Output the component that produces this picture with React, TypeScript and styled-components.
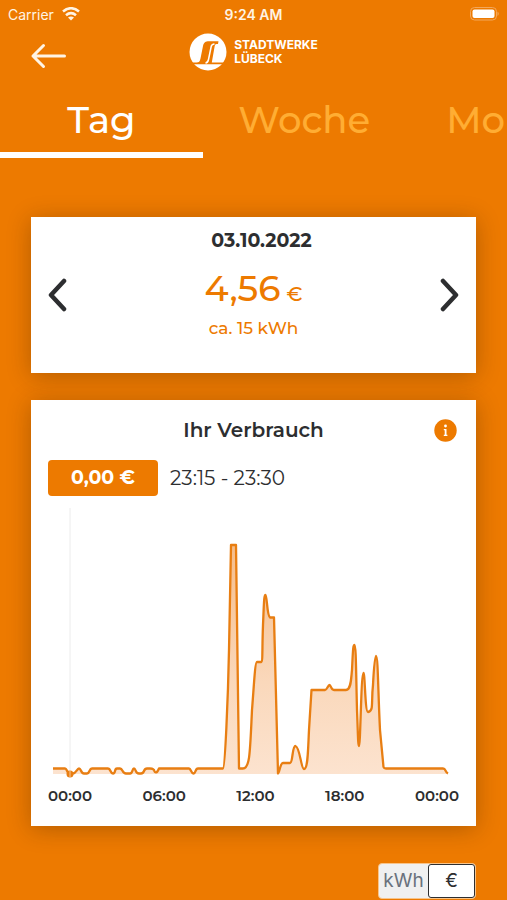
import React, { useState } from "react";
import styled, { createGlobalStyle } from "styled-components";

const ORANGE = "#ed7a00";
const INK = "#2d2e30";

const GlobalStyle = createGlobalStyle`
  *, *::before, *::after { box-sizing: border-box; }
  body {
    margin: 0;
    background: ${ORANGE};
    color: ${INK};
    font-family: Montserrat, Inter, "Open Sans", sans-serif;
    font-weight: 500;
    overflow-x: hidden;
  }
  button { font: inherit; color: inherit; cursor: pointer; }
`;

const Screen = styled.div`
  display: flex;
  flex-direction: column;
  overflow: hidden;
`;

const StatusBar = styled.div`
  display: grid;
  grid-template-columns: 1fr auto 1fr;
  align-items: center;
  height: 28px;
  padding: 0 8px;
  color: #fff4e4;
  font-family: Inter, sans-serif;
  font-size: 14px;
  font-weight: 400;
`;

const Carrier = styled.div`
  display: flex;
  align-items: center;
  gap: 8px;
`;

const Clock = styled.time`
  font-weight: 600;
`;

const BatteryIcon = styled.svg`
  justify-self: end;
`;

const Header = styled.header`
  display: grid;
  grid-template-columns: 1fr auto 1fr;
  align-items: center;
  height: 56px;
  padding: 0 30px;
`;

const IconButton = styled.button`
  display: flex;
  justify-self: start;
  padding: 0;
  border: 0;
  background: none;
`;

const Brand = styled.div`
  display: flex;
  align-items: center;
  gap: 7px;
  padding-bottom: 8px;
  color: #fff;
  font-family: Inter, "Open Sans", sans-serif;
  font-size: 12px;
  font-weight: 700;
  line-height: 14px;
`;

const BrandName = styled.span`
  display: flex;
  flex-direction: column;
`;

const Tabs = styled.nav`
  display: flex;
`;

const Tab = styled.button<{ $active: boolean }>`
  flex: 0 0 40%;
  height: 74px;
  padding: 4px 0 0;
  border: 0;
  border-bottom: 6px solid ${(p) => (p.$active ? "#fff" : "transparent")};
  background: none;
  color: ${(p) => (p.$active ? "#fff" : "#ffad33")};
  font-size: 37px;
  line-height: 44px;
`;

const Content = styled.main`
  display: flex;
  flex-direction: column;
  gap: 27px;
  padding: 59px 31px 0;
`;

const Card = styled.section`
  background: #fff;
  box-shadow: 0 3px 22px rgba(60, 30, 0, 0.32);
`;

const DayCard = styled(Card)`
  display: grid;
  grid-template-columns: auto 1fr auto;
  align-items: center;
  height: 156px;
  padding: 0 16px;
`;

const Summary = styled.div`
  display: flex;
  flex-direction: column;
  align-items: center;
  padding-bottom: 22px;
`;

const DateTitle = styled.h2`
  margin: 0;
  padding-left: 16px;
  font-size: 19px;
  font-weight: 700;
  line-height: 24px;
`;

const Price = styled.p`
  display: flex;
  align-items: baseline;
  gap: 6px;
  margin: 13px 0 0;
  color: ${ORANGE};
  font-size: 36px;
  line-height: 44px;
`;

const Unit = styled.span`
  font-size: 20px;
`;

const Energy = styled.p`
  margin: 0;
  color: ${ORANGE};
  font-size: 17px;
  line-height: 24px;
`;

const UsageCard = styled(Card)`
  padding-bottom: 20px;
`;

const UsageHead = styled.div`
  display: grid;
  grid-template-columns: 1fr auto 1fr;
  align-items: center;
  height: 60px;
  padding: 0 19px;
`;

const UsageTitle = styled.h2`
  grid-column: 2;
  margin: 0;
  font-size: 20px;
  font-weight: 600;
  line-height: 24px;
`;

const InfoButton = styled(IconButton)`
  justify-self: end;
`;

const Reading = styled.div`
  display: flex;
  align-items: center;
  gap: 12px;
  padding: 0 17px;
  font-size: 20px;
  font-weight: 400;
`;

const Badge = styled.strong`
  width: 110px;
  border-radius: 4px;
  background: ${ORANGE};
  color: #fff;
  font-size: 19px;
  font-weight: 700;
  line-height: 36px;
  text-align: center;
`;

const Chart = styled.svg`
  display: block;
  width: 100%;
  margin-top: 9px;
`;

const AxisLabels = styled.div`
  display: flex;
  justify-content: space-between;
  padding: 0 17px;
  font-size: 15px;
  font-weight: 600;
  line-height: 21px;
`;

const UnitSwitch = styled.div`
  display: grid;
  grid-template-columns: 49px 1fr;
  align-self: flex-end;
  width: 98px;
  height: 36px;
  margin-top: 10px;
  border: 1px solid #f8c48a;
  border-radius: 4px;
  background: #f0f0f0;
`;

const UnitButton = styled.button<{ $active: boolean }>`
  padding: 0;
  border: ${(p) => (p.$active ? `1px solid ${INK}` : "0")};
  border-radius: 3px;
  background: ${(p) => (p.$active ? "#fff" : "transparent")};
  color: ${(p) => (p.$active ? INK : "#6a727d")};
  font-family: Inter, sans-serif;
  font-size: 19px;
  font-weight: 400;
  line-height: 24px;
`;

const TABS = ["Tag", "Woche", "Monat"];
const HOURS = ["00:00", "06:00", "12:00", "18:00", "00:00"];
const UNITS = ["kWh", "€"];

const CURVE =
  "M53 768.500H65C67 768.500 67 773.500 70 773.500H73C76 773.500 77 768.500 79 768.500S81 773.500 84 773.500H87C90 773.500 89 768.500 92 768.500H108C111 768.500 110 773.500 113 773.500S114 768.500 117 768.500H120C123 768.500 122 773.500 126 773.500H130C133 773.500 132 768.500 134 768.500S135 773.500 139 773.500H141C145 773.500 143 768.500 147 768.500H150C153 768.500 152 768.500 154 770C155 773.500 157 773.500 159 768.500H189C191 768.500 191 773.500 193.500 773.500S195 768.500 198 768.500H223C225 768 228 700 229 650L231 545H236L239 768.500H243C250 768.500 250 752 252 710C254 685 255 662 257 662H261C263 662 262 650 263 625C264 602 264 595 265.500 595C267 595 267 616 270 617.500H274L278 773.500C279.500 773.500 280 763 283 763H290C293 763 292 746 295.500 746C300 747 301 769 304 769C308 769 308 750 309 730L311.500 690H325C327 690 328 685 329.500 685S331 690 334 690H346C351 690 351 680 352 670C353 650 353 645 354.500 645C356 645 356 670 357 710C358 735 358 746 359 746C360.500 746 361 673 363.500 673C365 673 365 712 368 712C374 711 371 703 373 685C374 665 375 656 376 656C378 656 378 690 380 730L383.500 767Q384 768.500 386 768.500H443C446 768.500 445 772 448 773.500";

function UsageChart() {
  return (
    <Chart viewBox="31 505 445 280" role="img" aria-label="Verbrauch im Tagesverlauf">
      <defs>
        <linearGradient id="usage-fill" x1="0" y1="545" x2="0" y2="774" gradientUnits="userSpaceOnUse">
          <stop offset="0" stopColor="#f5bd8b" />
          <stop offset="0.6" stopColor="#fad8bb" />
          <stop offset="1" stopColor="#fce3cf" />
        </linearGradient>
      </defs>
      <path d="M70 508V770" stroke="#ececec" strokeWidth="1" />
      <path d={`${CURVE}V774H53Z`} fill="url(#usage-fill)" />
      <path d={CURVE} fill="none" stroke="#e87e12" strokeWidth="2.300" strokeLinejoin="round" />
      <circle cx="70" cy="774" r="3.500" fill="#e87e12" />
      <path d="M70 771V777" stroke="#f6c79a" strokeWidth="1" />
    </Chart>
  );
}

function Chevron({ d, label }: { d: string; label: string }) {
  return (
    <IconButton type="button" aria-label={label}>
      <svg width="20" height="34" viewBox="0 0 20 34" fill="none" stroke={INK} strokeWidth="4.500" strokeLinecap="round" strokeLinejoin="round">
        <path d={d} />
      </svg>
    </IconButton>
  );
}

export default function App() {
  const [tab, setTab] = useState("Tag");
  const [unit, setUnit] = useState("€");

  return (
    <Screen>
      <GlobalStyle />
      <StatusBar>
        <Carrier>
          Carrier
          <svg width="18" height="14" viewBox="0 0 18 14" fill="none" stroke="#fff4e4" strokeWidth="2.600">
            <path d="M1 4.500Q9-2 17 4.500" />
            <path d="M4 8.200Q9 4 14 8.200" />
            <path d="M9 13.500L6 10.600Q9 8.400 12 10.600Z" fill="#fff4e4" stroke="none" />
          </svg>
        </Carrier>
        <Clock>9:24 AM</Clock>
        <BatteryIcon width="30" height="14" viewBox="0 0 30 14">
          <rect x="1.500" y="0.500" width="26" height="12.500" rx="4" fill="none" stroke="#f3a75a" />
          <rect x="3.500" y="2.500" width="22" height="8.500" rx="2" fill="#fff" />
          <path d="M28.500 4.500Q31 6.700 28.500 9Z" fill="#f3a75a" />
        </BatteryIcon>
      </StatusBar>

      <Header>
        <IconButton type="button" aria-label="Zurück">
          <svg width="37" height="26" viewBox="0 0 37 26" fill="none" stroke="#fff4e4" strokeWidth="3" strokeLinecap="round" strokeLinejoin="round">
            <path d="M34.500 13H3M13.500 2.500L3 13L13.500 23.500" />
          </svg>
        </IconButton>
        <Brand>
          <svg width="38" height="38" viewBox="0 0 38 38">
            <circle cx="19" cy="19" r="18.500" fill="#fff" />
            <path d="M1 29.500H7.500C10 29.500 10.800 28.500 11.500 25.500L14 13C14.800 9.500 16.500 8.200 20 8.200H29.500L29 11H27.500C26.500 11 26 11.800 25.700 13L22.800 29.500H38V31.300H0Z" fill={ORANGE} />
            <path d="M25.500 11C23.200 11.200 22.500 12 22.200 13.500L19.500 26.500C19.100 28.600 18.500 29.800 16.500 30" fill="none" stroke="#fff" strokeWidth="1.500" />
          </svg>
          <BrandName>
            <span>STADTWERKE</span>
            <span>LÜBECK</span>
          </BrandName>
        </Brand>
      </Header>

      <Tabs aria-label="Zeitraum">
        {TABS.map((name) => (
          <Tab key={name} type="button" $active={name === tab} aria-pressed={name === tab} onClick={() => setTab(name)}>
            {name}
          </Tab>
        ))}
      </Tabs>

      <Content>
        <DayCard>
          <Chevron d="M17 3L4 17L17 31" label="Vorheriger Tag" />
          <Summary>
            <DateTitle>03.10.2022</DateTitle>
            <Price>4,56 <Unit>€</Unit></Price>
            <Energy>ca. 15 kWh</Energy>
          </Summary>
          <Chevron d="M3 3L16 17L3 31" label="Nächster Tag" />
        </DayCard>

        <UsageCard>
          <UsageHead>
            <UsageTitle>Ihr Verbrauch</UsageTitle>
            <InfoButton type="button" aria-label="Information">
              <svg width="23" height="23" viewBox="0 0 23 23">
                <circle cx="11.500" cy="11.500" r="11.200" fill={ORANGE} />
                <circle cx="11.500" cy="7" r="1.400" fill="#fff" />
                <path d="M9.800 10H12.500V15.800H13.400V17H9.800V15.800H10.700V11.200H9.800Z" fill="#fff" />
              </svg>
            </InfoButton>
          </UsageHead>
          <Reading>
            <Badge>0,00 €</Badge>
            <span>23:15 - 23:30</span>
          </Reading>
          <UsageChart />
          <AxisLabels>
            {HOURS.map((hour, i) => (
              <span key={i}>{hour}</span>
            ))}
          </AxisLabels>
        </UsageCard>

        <UnitSwitch role="group" aria-label="Einheit">
          {UNITS.map((name) => (
            <UnitButton key={name} type="button" $active={name === unit} aria-pressed={name === unit} onClick={() => setUnit(name)}>
              {name}
            </UnitButton>
          ))}
        </UnitSwitch>
      </Content>
    </Screen>
  );
}
